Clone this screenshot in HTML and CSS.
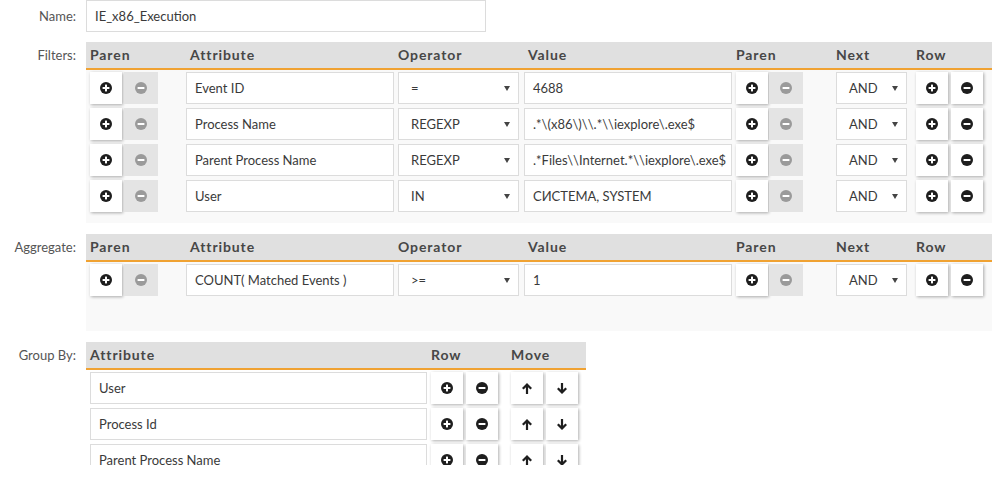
FILE: index.html
```html
<!DOCTYPE html>
<html>
<head>
<meta charset="utf-8">
<link rel="stylesheet" href="styles.css">
</head>
<body>
<svg width="0" height="0" class="defs">
  <defs>
    <symbol id="i-plus" viewBox="0 0 12 12"><circle cx="6" cy="6" r="6"/><rect x="2.6" y="5" width="6.8" height="2" fill="#fff"/><rect x="5" y="2.6" width="2" height="6.8" fill="#fff"/></symbol>
    <symbol id="i-minus" viewBox="0 0 12 12"><circle cx="6" cy="6" r="6"/><rect x="2.6" y="5" width="6.8" height="2" fill="#fff"/></symbol>
    <symbol id="i-up" viewBox="0 0 10 11"><path d="M5 0 L10 5 L8.4 6.5 L6.1 4.2 V11 H3.9 V4.2 L1.6 6.5 L0 5 Z"/></symbol>
    <symbol id="i-down" viewBox="0 0 10 11"><path d="M5 11 L10 6 L8.4 4.5 L6.1 6.8 V0 H3.9 V6.8 L1.6 4.5 L0 6 Z"/></symbol>
  </defs>
</svg>
<div class="form">
  <div class="field">
    <div class="lbl lbl-name">Name:</div>
    <div class="input name-input">IE_x86_Execution</div>
  </div>

  <div class="field section">
    <div class="lbl">Filters:</div>
    <div class="table wide">
      <div class="thead cols">
        <span>Paren</span><span class="pl">Attribute</span><span>Operator</span><span class="pl">Value</span><span>Paren</span><span>Next</span><span>Row</span>
      </div>
      <div class="tbody filters-body">
        <div class="row cols">
          <div class="pair"><span class="btn"><svg class="ic"><use href="#i-plus"/></svg></span><span class="btn off w33"><svg class="ic"><use href="#i-minus"/></svg></span></div>
          <div class="input attr">Event ID</div>
          <div class="select op">=<i class="caret"></i></div>
          <div class="input val">4688</div>
          <div class="pair"><span class="btn"><svg class="ic"><use href="#i-plus"/></svg></span><span class="btn off w34"><svg class="ic"><use href="#i-minus"/></svg></span></div>
          <div class="select next">AND<i class="caret"></i></div>
          <div class="pair gap3"><span class="btn"><svg class="ic"><use href="#i-plus"/></svg></span><span class="btn"><svg class="ic"><use href="#i-minus"/></svg></span></div>
        </div>
        <div class="row cols">
          <div class="pair"><span class="btn"><svg class="ic"><use href="#i-plus"/></svg></span><span class="btn off w33"><svg class="ic"><use href="#i-minus"/></svg></span></div>
          <div class="input attr">Process Name</div>
          <div class="select op">REGEXP<i class="caret"></i></div>
          <div class="input val">.*\(x86\)\\.*\\iexplore\.exe$</div>
          <div class="pair"><span class="btn"><svg class="ic"><use href="#i-plus"/></svg></span><span class="btn off w34"><svg class="ic"><use href="#i-minus"/></svg></span></div>
          <div class="select next">AND<i class="caret"></i></div>
          <div class="pair gap3"><span class="btn"><svg class="ic"><use href="#i-plus"/></svg></span><span class="btn"><svg class="ic"><use href="#i-minus"/></svg></span></div>
        </div>
        <div class="row cols">
          <div class="pair"><span class="btn"><svg class="ic"><use href="#i-plus"/></svg></span><span class="btn off w33"><svg class="ic"><use href="#i-minus"/></svg></span></div>
          <div class="input attr">Parent Process Name</div>
          <div class="select op">REGEXP<i class="caret"></i></div>
          <div class="input val">.*Files\\Internet.*\\iexplore\.exe$</div>
          <div class="pair"><span class="btn"><svg class="ic"><use href="#i-plus"/></svg></span><span class="btn off w34"><svg class="ic"><use href="#i-minus"/></svg></span></div>
          <div class="select next">AND<i class="caret"></i></div>
          <div class="pair gap3"><span class="btn"><svg class="ic"><use href="#i-plus"/></svg></span><span class="btn"><svg class="ic"><use href="#i-minus"/></svg></span></div>
        </div>
        <div class="row cols">
          <div class="pair"><span class="btn"><svg class="ic"><use href="#i-plus"/></svg></span><span class="btn off w33"><svg class="ic"><use href="#i-minus"/></svg></span></div>
          <div class="input attr">User</div>
          <div class="select op">IN<i class="caret"></i></div>
          <div class="input val">СИСТЕМА, SYSTEM</div>
          <div class="pair"><span class="btn"><svg class="ic"><use href="#i-plus"/></svg></span><span class="btn off w34"><svg class="ic"><use href="#i-minus"/></svg></span></div>
          <div class="select next">AND<i class="caret"></i></div>
          <div class="pair gap3"><span class="btn"><svg class="ic"><use href="#i-plus"/></svg></span><span class="btn"><svg class="ic"><use href="#i-minus"/></svg></span></div>
        </div>
      </div>
    </div>
  </div>

  <div class="field section">
    <div class="lbl">Aggregate:</div>
    <div class="table wide">
      <div class="thead cols">
        <span>Paren</span><span class="pl">Attribute</span><span>Operator</span><span class="pl">Value</span><span>Paren</span><span>Next</span><span>Row</span>
      </div>
      <div class="tbody agg-body">
        <div class="row cols">
          <div class="pair"><span class="btn"><svg class="ic"><use href="#i-plus"/></svg></span><span class="btn off w33"><svg class="ic"><use href="#i-minus"/></svg></span></div>
          <div class="input attr">COUNT( Matched Events )</div>
          <div class="select op">&gt;=<i class="caret"></i></div>
          <div class="input val">1</div>
          <div class="pair"><span class="btn"><svg class="ic"><use href="#i-plus"/></svg></span><span class="btn off w34"><svg class="ic"><use href="#i-minus"/></svg></span></div>
          <div class="select next">AND<i class="caret"></i></div>
          <div class="pair gap3"><span class="btn"><svg class="ic"><use href="#i-plus"/></svg></span><span class="btn"><svg class="ic"><use href="#i-minus"/></svg></span></div>
        </div>
      </div>
    </div>
  </div>

  <div class="field section">
    <div class="lbl">Group By:</div>
    <div class="table narrow">
      <div class="thead gcols">
        <span>Attribute</span><span>Row</span><span>Move</span>
      </div>
      <div class="tbody group-body">
        <div class="row gcols">
          <div class="input gattr">User</div>
          <div class="pair gap3"><span class="btn"><svg class="ic"><use href="#i-plus"/></svg></span><span class="btn"><svg class="ic"><use href="#i-minus"/></svg></span></div>
          <div class="pair gap3"><span class="btn"><svg class="ar"><use href="#i-up"/></svg></span><span class="btn"><svg class="ar"><use href="#i-down"/></svg></span></div>
        </div>
        <div class="row gcols">
          <div class="input gattr">Process Id</div>
          <div class="pair gap3"><span class="btn"><svg class="ic"><use href="#i-plus"/></svg></span><span class="btn"><svg class="ic"><use href="#i-minus"/></svg></span></div>
          <div class="pair gap3"><span class="btn"><svg class="ar"><use href="#i-up"/></svg></span><span class="btn"><svg class="ar"><use href="#i-down"/></svg></span></div>
        </div>
        <div class="row gcols">
          <div class="input gattr">Parent Process Name</div>
          <div class="pair gap3"><span class="btn"><svg class="ic"><use href="#i-plus"/></svg></span><span class="btn"><svg class="ic"><use href="#i-minus"/></svg></span></div>
          <div class="pair gap3"><span class="btn"><svg class="ar"><use href="#i-up"/></svg></span><span class="btn"><svg class="ar"><use href="#i-down"/></svg></span></div>
        </div>
      </div>
    </div>
  </div>
</div>
</body>
</html>
```

FILE: styles.css
```css
html, body {
  margin: 0;
  padding: 0;
  background: #fff;
  height: 478px;
  overflow: hidden;
}
body {
  font-family: Lato, "Noto Sans", "Liberation Sans", sans-serif;
  font-size: 13px;
  color: #333;
}
.defs {
  position: absolute;
  width: 0;
  height: 0;
}
.form {
  display: flex;
  flex-direction: column;
  height: 465px;
  overflow: hidden;
}
.field {
  display: grid;
  grid-template-columns: 86px auto;
  align-items: start;
  flex: none;
}
.section {
  margin-top: 10px;
}
.section + .section {
  margin-top: 11px;
}
.lbl {
  text-align: right;
  padding-right: 10px;
  line-height: 26px;
  color: #555;
  font-size: 13px;
}
.lbl-name {
  line-height: 32px;
}
.input, .select {
  box-sizing: border-box;
  height: 32px;
  border: 1px solid #dcdcdc;
  background: #fff;
  line-height: 30px;
  padding-left: 8px;
  white-space: nowrap;
  overflow: hidden;
  color: #3a3a3a;
}
.name-input {
  width: 400px;
}
.table.wide {
  width: 906px;
}
.table.narrow {
  width: 500px;
}
.thead {
  height: 26px;
  line-height: 26px;
  background: #e0e0e0;
  border-bottom: 2px solid #f0a232;
  font-weight: 700;
  font-size: 14px;
  letter-spacing: 0.9px;
  color: #474747;
  padding-left: 4px;
}
.cols {
  display: grid;
  grid-template-columns: 96px 212px 126px 212px 100px 80px 76px;
  align-items: center;
}
.gcols {
  display: grid;
  grid-template-columns: 341px 80px auto;
  align-items: center;
}
.thead .pl {
  padding-left: 4px;
}
.tbody {
  display: flex;
  flex-direction: column;
  gap: 4px;
  padding: 2px 0 0 4px;
}
.filters-body {
  background: #f9f9f9;
  padding-bottom: 11px;
}
.agg-body {
  background: #f9f9f9;
  padding-bottom: 35px;
}
.row {
  height: 32px;
  flex: none;
}
.pair {
  display: flex;
  gap: 1px;
}
.pair.gap3 {
  gap: 3px;
}
.btn {
  box-sizing: border-box;
  width: 32px;
  height: 32px;
  background: #fff;
  box-shadow: 1px 1px 3px rgba(0, 0, 0, 0.32);
  display: flex;
  align-items: center;
  justify-content: center;
  fill: #1e1e1e;
}
.btn.off {
  background: #e4e4e4;
  box-shadow: none;
  fill: #9a9a9a;
}
.btn.w33 {
  width: 34px;
  margin-left: 1px;
}
.btn.w34 {
  width: 34px;
}
.ic {
  width: 12px;
  height: 12px;
}
.ar {
  width: 10px;
  height: 11px;
}
.attr, .val {
  width: 208px;
}
.select {
  position: relative;
  padding-left: 12px;
}
.op {
  width: 121px;
}
.next {
  width: 71px;
}
.caret {
  position: absolute;
  right: 8px;
  top: 13px;
  width: 0;
  height: 0;
  border-left: 3px solid transparent;
  border-right: 3px solid transparent;
  border-top: 5px solid #444;
}
.gattr {
  width: 337px;
}
```
